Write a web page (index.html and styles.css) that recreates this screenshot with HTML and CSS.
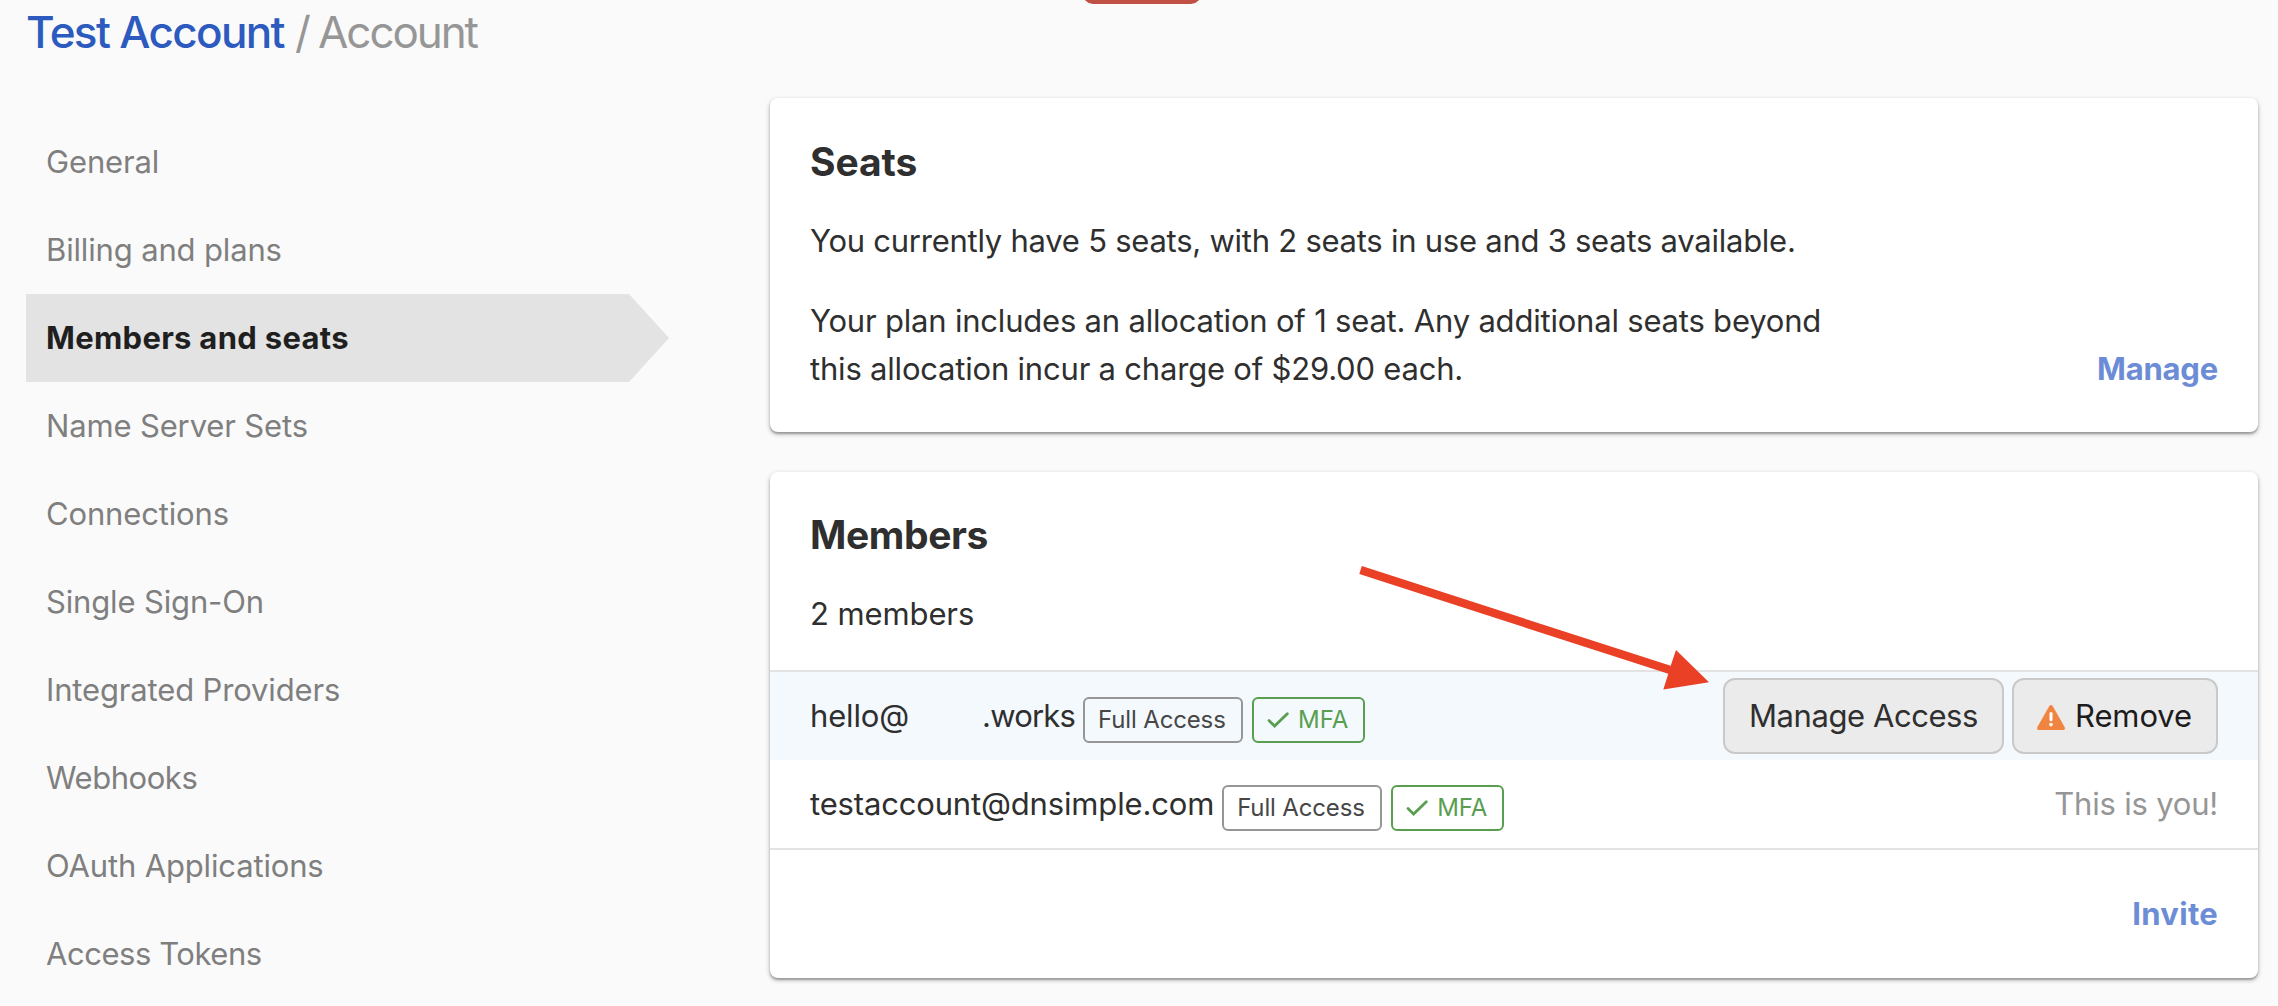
FILE: index.html
```
<!DOCTYPE html>
<html lang="en">
<head>
<meta charset="utf-8">
<title>Account – Members and seats</title>
<link rel="stylesheet" href="styles.css">
</head>
<body>
<span class="flash"></span>
<header class="crumbs">
  <a class="crumb-link">Test Account</a><span class="slash">/</span><span class="crumb-current">Account</span>
</header>
<div class="layout">
  <nav class="nav">
    <a class="nav-item">General</a>
    <a class="nav-item">Billing and plans</a>
    <a class="nav-item active">Members and seats</a>
    <a class="nav-item">Name Server Sets</a>
    <a class="nav-item">Connections</a>
    <a class="nav-item">Single Sign-On</a>
    <a class="nav-item">Integrated Providers</a>
    <a class="nav-item kern">Webhooks</a>
    <a class="nav-item">OAuth Applications</a>
    <a class="nav-item kern">Access Tokens</a>
  </nav>
  <main class="main">
    <section class="card seats">
      <div class="seats-copy">
        <h2>Seats</h2>
        <p>You currently have 5 seats, with 2 seats in use and 3 seats available.</p>
        <p class="plan">Your plan includes an allocation of 1 seat. Any additional seats beyond<br>this allocation incur a charge of $29.00 each.</p>
      </div>
      <a class="action">Manage</a>
    </section>
    <section class="card members">
      <div class="members-head">
        <h2 class="tight">Members</h2>
        <p>2 members</p>
      </div>
      <div class="row hovered">
        <span class="email">hello@<span class="redacted"></span><span class="domain">.works</span></span>
        <span class="badge">Full Access</span>
        <span class="badge ok"><svg class="check" viewBox="0 0 22 18"><path d="M2 9.6 L7.6 15 L20.3 2.8"/></svg>MFA</span>
        <div class="row-end">
          <button class="btn manage">Manage Access</button>
          <button class="btn remove"><svg class="warn" viewBox="0 0 28 25"><path class="tri" d="M12.3 1 Q14 -1 15.7 1 L27.6 22 Q28.6 25 26 25 H2 Q-.6 25 .4 22 Z"/><path class="bang" d="M14 8.6 V14.8"/><circle class="dot" cx="14" cy="19.6" r="1.8"/></svg>Remove</button>
        </div>
      </div>
      <div class="row">
        <span class="email">testaccount@dnsimple.com</span>
        <span class="badge">Full Access</span>
        <span class="badge ok"><svg class="check" viewBox="0 0 22 18"><path d="M2 9.6 L7.6 15 L20.3 2.8"/></svg>MFA</span>
        <div class="row-end you">This is you!</div>
      </div>
      <div class="members-foot"><a class="action invite">Invite</a></div>
    </section>
  </main>
</div>
<svg class="arrow" viewBox="0 0 352 126"><path d="M3.8 1 L312.7 100.8 L318 85 L351 117.3 L305.3 124.5 L310.3 108.8 L1.3 9 Z"/></svg>
</body>
</html>
```
FILE: styles.css
```
* { box-sizing: border-box; }

body {
  margin: 0;
  height: 1006px;
  overflow: hidden;
  background: #fafafa;
  color: #2f2f2f;
  font: 400 31px/48px Inter, "Liberation Sans", sans-serif;
  letter-spacing: -0.2px;
}

h2, p { margin: 0; }

.flash {
  position: absolute;
  top: -36px;
  left: 1083px;
  width: 118px;
  height: 40px;
  border-radius: 10px;
  background: #c04f44;
}

.crumbs {
  display: flex;
  height: 98px;
  padding-left: 26px;
  font-size: 44px;
  line-height: 64px;
  letter-spacing: -1.65px;
  color: #969696;
}
.crumb-link { color: #2c5abf; font-weight: 500; }
.slash { margin-left: 11px; }
.crumb-current { margin-left: 9px; letter-spacing: -2.1px; }

.layout { display: flex; padding: 0 20px 0 26px; justify-content: space-between; }

.nav { width: 643px; padding-top: 20px; }
.nav-item {
  display: block;
  height: 88px;
  padding-left: 20px;
  line-height: 87px;
  letter-spacing: -0.15px;
  color: #7f7f7f;
}
.nav-item.kern { letter-spacing: -0.45px; }
.nav-item.active {
  background: #e3e3e3;
  clip-path: polygon(0 0, 603px 0, 100% 50%, 603px 100%, 0 100%);
  color: #1f1f1f;
  font-weight: 700;
  letter-spacing: 0.3px;
}

.main { width: 1488px; display: flex; flex-direction: column; gap: 40px; }

.card {
  border-radius: 8px;
  background: #fff;
  box-shadow: 0 2px 5px rgba(0, 0, 0, .28), 0 2px 2px rgba(0, 0, 0, .22);
}

h2 { font-size: 39px; font-weight: 700; letter-spacing: -0.1px; margin-bottom: 31px; }
h2.tight { letter-spacing: -0.4px; }

.seats {
  display: flex;
  justify-content: space-between;
  align-items: flex-end;
  height: 334px;
  padding: 39px 40px;
}
.seats-copy p { letter-spacing: -0.25px; }
.seats-copy .plan { margin-top: 32px; letter-spacing: -0.2px; }

.action { color: #6c8dd5; font-weight: 700; letter-spacing: -0.2px; }
.invite { letter-spacing: 0.3px; }

.members-head { height: 198px; padding: 39px 40px 0; }
.members-head p { letter-spacing: -0.1px; }

.row { display: flex; align-items: center; height: 88px; padding: 0 40px; }
.row.hovered { height: 90px; border-top: 2px solid #e3e3e3; background: #f4f9fd; }

.email { display: inline-flex; margin-right: 8px; letter-spacing: -0.16px; }
.redacted { width: 73px; }
.domain { letter-spacing: -0.8px; }

.badge {
  display: inline-flex;
  align-items: center;
  width: 160px;
  height: 46px;
  margin: 8px 9px 0 0;
  padding: 0 13px;
  border: 2px solid #969696;
  border-radius: 6px;
  background: #fff;
  color: #474747;
  font-size: 24px;
  white-space: nowrap;
  letter-spacing: -0.15px;
}
.hovered .badge { background: transparent; }
.badge.ok { width: 113px; margin-right: 0; border-color: #5a9e51; color: #5a9e51; letter-spacing: 0; }
.check { flex: none; width: 22px; height: 18px; margin-right: 9px; fill: none; stroke: #5a9e51; stroke-width: 2.8; stroke-linecap: round; }

.row-end { display: flex; gap: 8px; margin-left: auto; }
.you { color: #969696; }

.btn {
  display: flex;
  align-items: center;
  height: 76px;
  border: 2px solid #c9c9c9;
  border-radius: 12px;
  background: #ebebeb;
  color: #2f2f2f;
  font: inherit;
}
.manage { width: 281px; padding: 0 24px; letter-spacing: -0.43px; }
.remove { width: 206px; padding: 0 23px; color: #1c1c1c; letter-spacing: -0.1px; }
.warn { flex: none; width: 28px; height: 25px; margin: 2px 10px 0 0; }
.tri { fill: #f08542; }
.bang { stroke: #fff; stroke-width: 3; stroke-linecap: round; }
.dot { fill: #fff; }

.members-foot {
  display: flex;
  justify-content: flex-end;
  align-items: center;
  height: 130px;
  padding: 0 40px;
  border-top: 2px solid #e3e3e3;
}

/* annotation laid over the members card */
.arrow { position: absolute; left: 1358px; top: 565px; width: 352px; height: 126px; fill: #ea4026; }
```
